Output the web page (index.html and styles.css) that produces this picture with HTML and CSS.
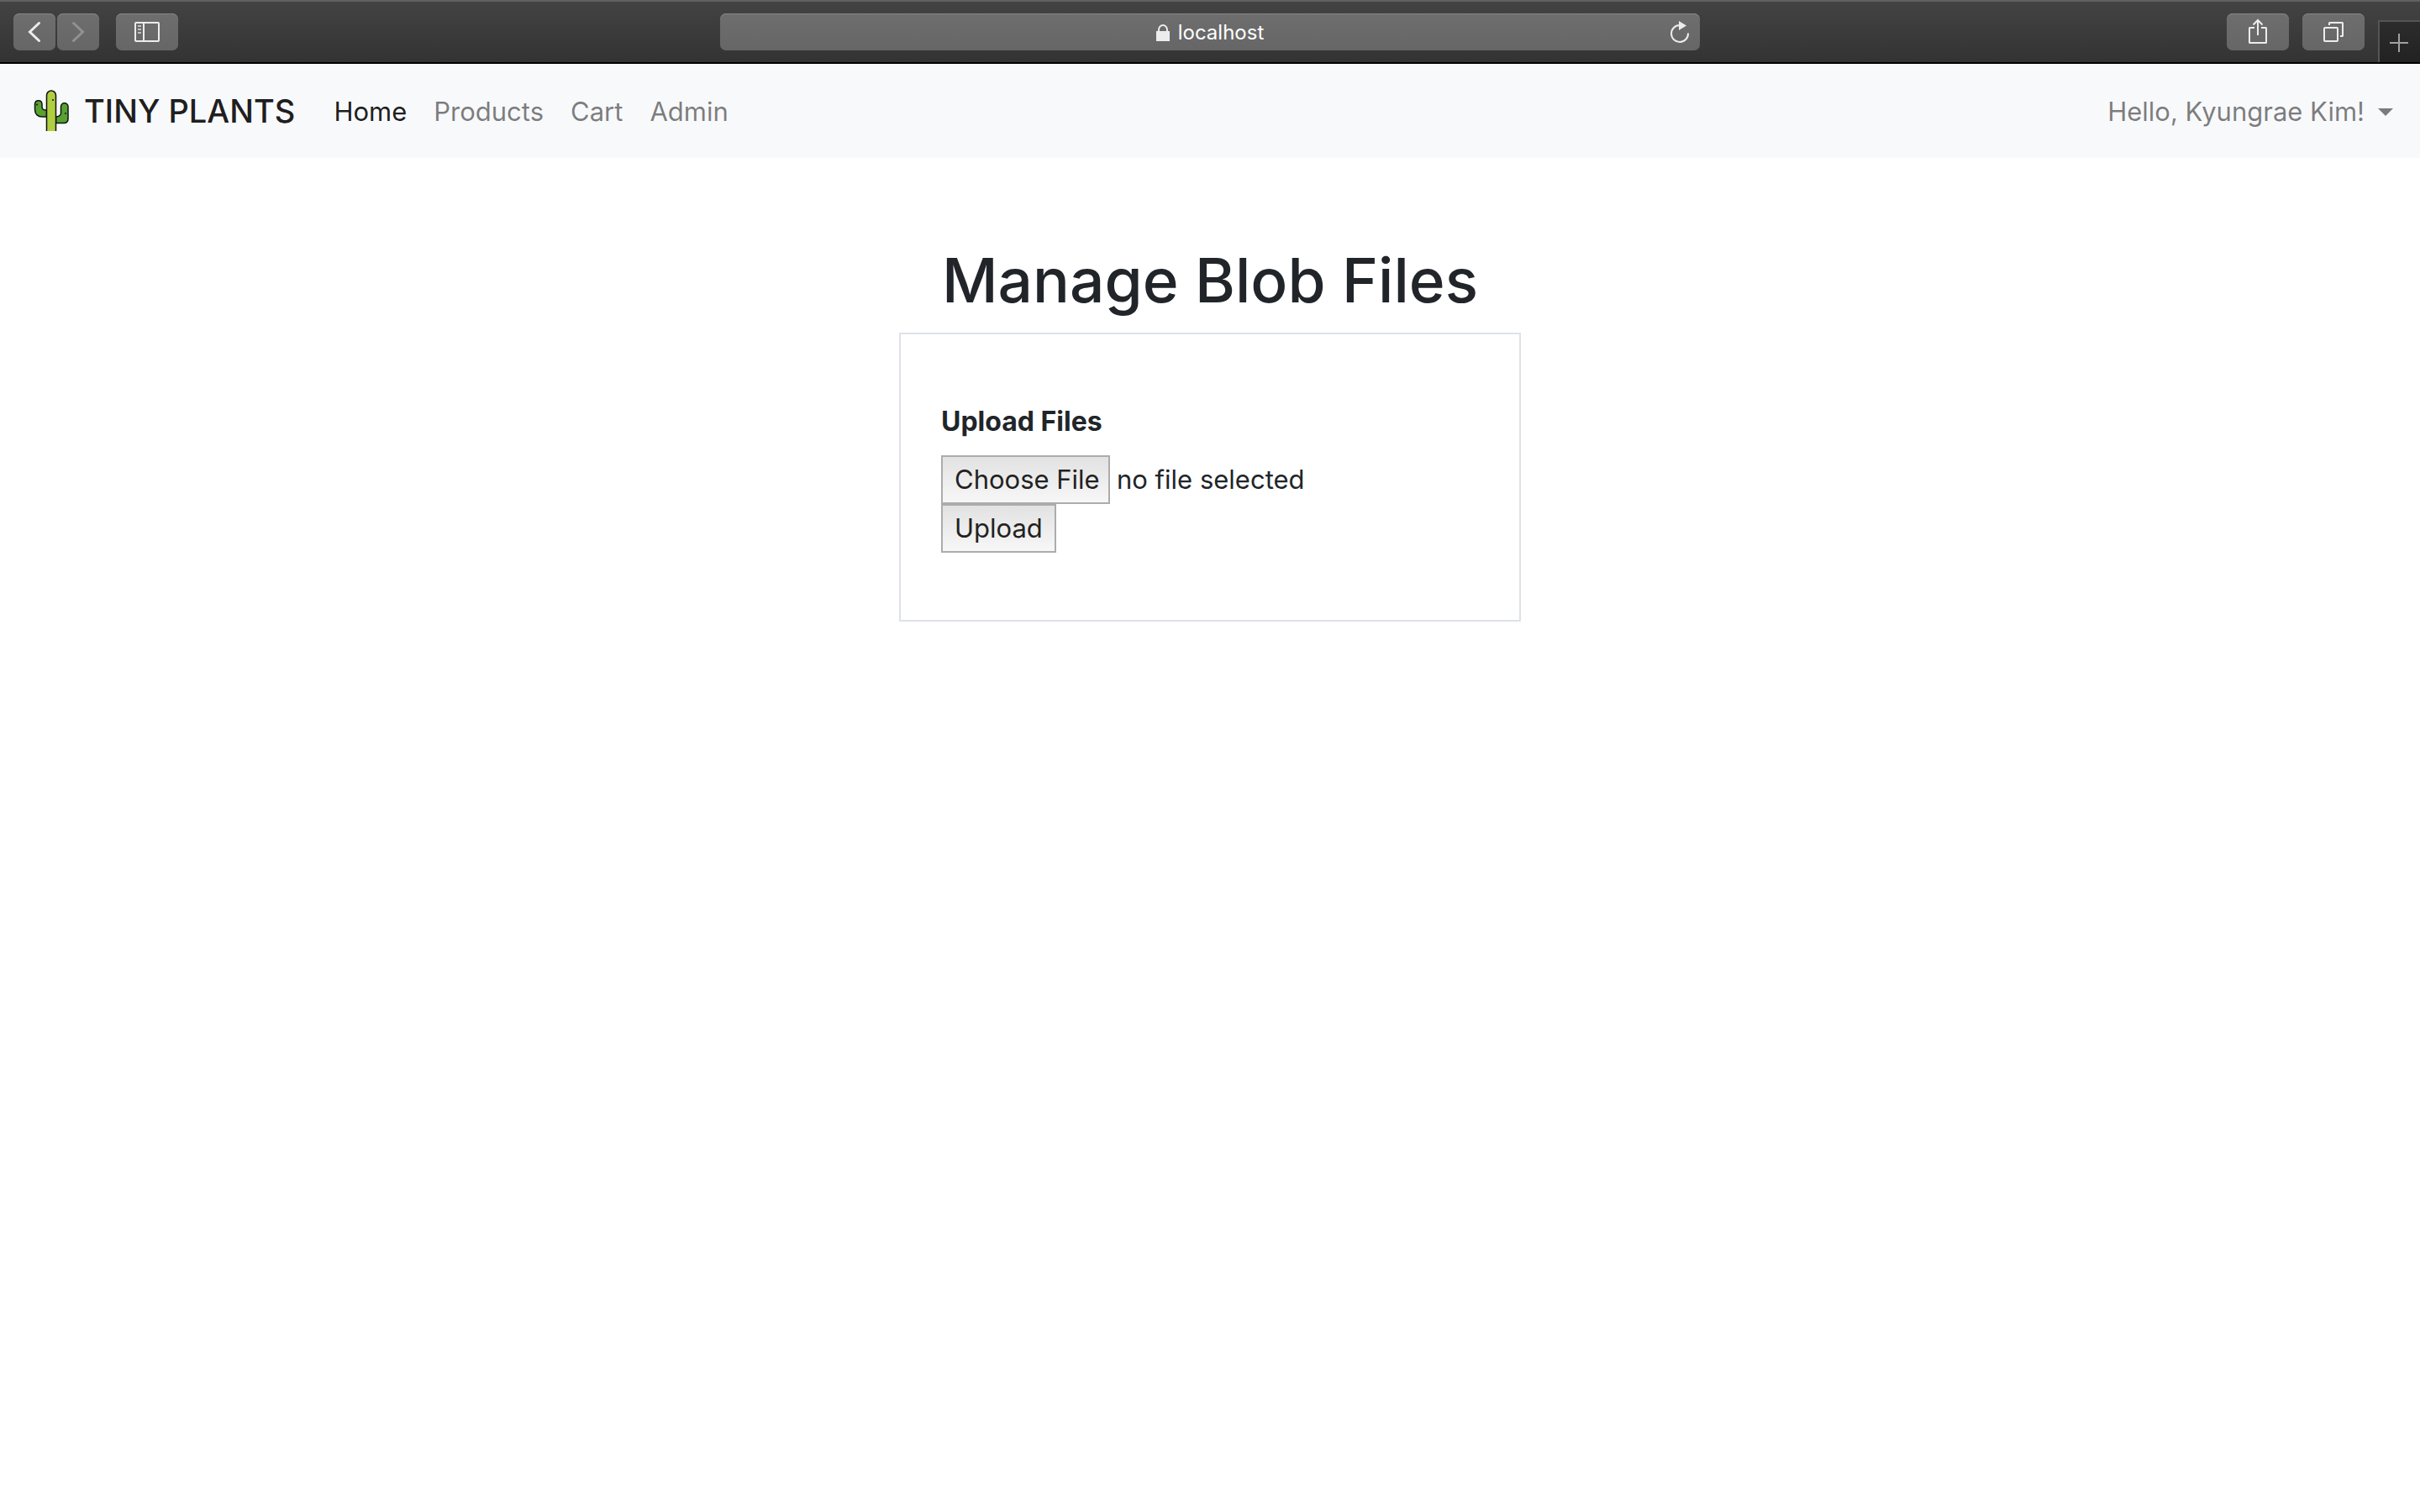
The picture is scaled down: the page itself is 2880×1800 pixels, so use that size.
FILE: index.html
```html
<!DOCTYPE html>
<html lang="en">
<head>
<meta charset="utf-8">
<title>Tiny Plants - Manage Blob Files</title>
<link rel="stylesheet" href="styles.css">
</head>
<body>
<div class="toolbar">
  <div class="toolbar-group">
    <div class="history">
      <button class="tool tool-small" type="button" aria-label="Back">
        <svg width="50" height="44" viewBox="0 0 50 44"><path d="M30.500 11.500 19.500 22l11 10.500" fill="none" stroke="#ececec" stroke-width="3" stroke-linecap="round" stroke-linejoin="miter"/></svg>
      </button>
      <button class="tool tool-small" type="button" aria-label="Forward">
        <svg width="50" height="44" viewBox="0 0 50 44"><path d="M19.500 11.500 30.500 22l-11 10.500" fill="none" stroke="#929292" stroke-width="3" stroke-linecap="round" stroke-linejoin="miter"/></svg>
      </button>
    </div>
    <button class="tool" type="button" aria-label="Sidebar">
      <svg width="74" height="44" viewBox="0 0 74 44" fill="none" stroke="#ececec" stroke-width="2"><rect x="23" y="11" width="28" height="22" rx="1"/><path d="M33 11v22"/><path d="M26 15h4M26 19h4M26 23h4" stroke="#c4c4c4"/></svg>
    </button>
  </div>
  <div class="address">
    <span class="address-text">
      <svg width="16" height="20" viewBox="0 0 16 20"><path d="M0 8h16v12H0z" fill="#ececec"/><path d="M3 9V6.500a5 5.500 0 0 1 10 0V9" fill="none" stroke="#ececec" stroke-width="2"/></svg>
      <span>localhost</span>
    </span>
    <button class="reload" type="button" aria-label="Reload">
      <svg width="24" height="28" viewBox="0 0 24 28"><path d="M22 14.500A10 10 0 1 1 12 5" fill="none" stroke="#ececec" stroke-width="2"/><path d="M11 0 20 5.500 11 11z" fill="#ececec"/></svg>
    </button>
  </div>
  <div class="toolbar-group toolbar-end">
    <button class="tool" type="button" aria-label="Share">
      <svg width="74" height="44" viewBox="0 0 74 44" fill="none" stroke="#ececec" stroke-width="2"><path d="M33 17h-5.500q-.5 0-.5.500v17q0 .5.500.5h19q.5 0 .5-.5v-17q0-.5-.5-.5H41"/><path d="M37 26V8M31.500 13.500 37 8l5.500 5.500"/></svg>
    </button>
    <button class="tool" type="button" aria-label="Show tabs">
      <svg width="74" height="44" viewBox="0 0 74 44" fill="none" stroke="#ececec" stroke-width="2"><rect x="26" y="17" width="16" height="16" rx="1"/><path d="M32 14v-2.500q0-.5.500-.5h15q.5 0 .5.500v15q0 .5-.5.500H45"/></svg>
    </button>
    <button class="new-tab" type="button" aria-label="New tab">
      <svg width="22" height="22" viewBox="0 0 22 22"><path d="M0 11h22M11 0v22" stroke="#a0a0a0" stroke-width="2"/></svg>
    </button>
  </div>
</div>

<nav class="navbar">
  <a class="brand" href="#">
    <svg class="cactus" width="42" height="50" viewBox="0 0 42 50" stroke="#111" stroke-width="1.500">
      <path d="M15.500 24q-5 .5-5.500-3.500v-4a4.300 4.300 0 0 0-8.500 0V23q0 9 9 9h5z" fill="#57a232"/>
      <path d="M26.500 39.500h9.500q5 0 5-5V20a4.200 4.200 0 0 0-8.500 0v8q-.5 3.500-6 4z" fill="#57a232"/>
      <path d="M15.500 49V6.500a5.500 5.500 0 0 1 11 0V49" fill="#b0cf40"/>
      <circle cx="4" cy="17.500" r="1" fill="#111" stroke="none"/>
      <circle cx="23" cy="12" r="1" fill="#111" stroke="none"/>
      <circle cx="38" cy="28" r="1" fill="#111" stroke="none"/>
    </svg>
    <span>TINY PLANTS</span>
  </a>
  <div class="nav-links">
    <a class="nav-link active" href="#">Home</a>
    <a class="nav-link" href="#">Products</a>
    <a class="nav-link" href="#">Cart</a>
    <a class="nav-link" href="#">Admin</a>
  </div>
  <a class="nav-link account" href="#">Hello, Kyungrae Kim!<span class="caret"></span></a>
</nav>

<main class="page">
  <h1 class="title">Manage Blob Files</h1>
  <form class="card">
    <label class="field-label" for="files">Upload Files</label>
    <div class="file-row">
      <input class="file" type="file" id="files">
      <span>no file selected</span>
    </div>
    <button class="button" type="button">Upload</button>
  </form>
</main>
</body>
</html>
```
FILE: styles.css
```css
* {
  box-sizing: border-box;
}

body {
  margin: 0;
  background: #fff;
  color: #212529;
  font-family: Inter, "Liberation Sans", sans-serif;
  font-size: 31px;
  line-height: 48px;
}

button,
input {
  margin: 0;
  font: inherit;
}

svg {
  display: block;
}

/* Browser toolbar */
.toolbar {
  display: grid;
  grid-template-columns: 1fr minmax(0, 1166px) 1fr;
  height: 76px;
  padding-top: 14px;
  border-top: 2px solid #616161;
  border-bottom: 2px solid #000;
  background: linear-gradient(#434343, #333);
}

.toolbar-group {
  display: flex;
  align-items: flex-start;
  gap: 20px;
  padding-left: 16px;
}

.history {
  display: flex;
  gap: 2px;
}

.toolbar-end {
  justify-content: flex-end;
  gap: 16px;
  padding-left: 0;
}

.tool {
  width: 74px;
  height: 44px;
  padding: 0;
  border: 0;
  border-radius: 7px;
  background: linear-gradient(#6e6e6e, #666);
  box-shadow: inset 0 1px 0 #868686;
}

.tool-small {
  width: 50px;
}

.address {
  display: grid;
  grid-template-columns: 24px 1fr 24px;
  align-items: center;
  height: 44px;
  padding: 0 12px;
  border-radius: 7px;
  background: linear-gradient(#6e6e6e, #666);
  box-shadow: inset 0 1px 0 #868686;
}

.address-text {
  display: flex;
  grid-column: 2;
  align-items: center;
  justify-content: center;
  gap: 10px;
  color: #fff;
  font-size: 24px;
  line-height: 46px;
}

.reload {
  padding: 0;
  border: 0;
  background: none;
}

.new-tab {
  display: flex;
  align-items: center;
  justify-content: center;
  align-self: flex-end;
  width: 50px;
  height: 50px;
  padding: 2px 2px 0 0;
  border: 0 solid #555;
  border-width: 2px 0 0 2px;
  background: linear-gradient(#2c2c2c, #222);
}

/* Site navigation */
.navbar {
  display: flex;
  align-items: center;
  height: 112px;
  padding: 0 32px 0 40px;
  background: #f8f9fb;
}

.brand {
  display: flex;
  align-items: center;
  gap: 18px;
  margin-right: 30px;
  color: rgba(0, 0, 0, 0.9);
  font-size: 38px;
  font-weight: 500;
  line-height: 60px;
  text-decoration: none;
}

.nav-links {
  display: flex;
}

.nav-link {
  padding: 18px 16px 16px;
  color: rgba(0, 0, 0, 0.5);
  text-decoration: none;
}

.active {
  color: rgba(0, 0, 0, 0.9);
}

.account {
  display: flex;
  align-items: center;
  gap: 16px;
  margin-left: auto;
  padding-right: 0;
}

.caret {
  border: 9px solid transparent;
  border-top-color: currentColor;
  border-bottom: 0;
}

/* Page */
.page {
  display: flex;
  flex-direction: column;
  align-items: center;
  padding: 98px 32px;
}

.title {
  margin: 0 0 14px;
  font-size: 73px;
  font-weight: 500;
  line-height: 96px;
}

.card {
  width: 100%;
  max-width: 740px;
  padding: 80px 48px;
  border: 2px solid #dee2e6;
}

.field-label {
  display: block;
  margin-bottom: 16px;
  font-size: 32px;
  font-weight: 700;
}

.file-row {
  display: flex;
  align-items: center;
  gap: 8px;
}

.file {
  width: 201px;
  height: 58px;
  overflow: hidden;
  color: transparent;
}

.file::file-selector-button {
  width: 201px;
  margin: 0;
}

.button,
.file::file-selector-button {
  height: 58px;
  padding: 0 14px;
  border: 2px solid #acacac;
  border-radius: 0;
  background: linear-gradient(#e2e2e2, #f7f7f7);
  color: #222;
  font: inherit;
}

.button {
  display: block;
}
```
